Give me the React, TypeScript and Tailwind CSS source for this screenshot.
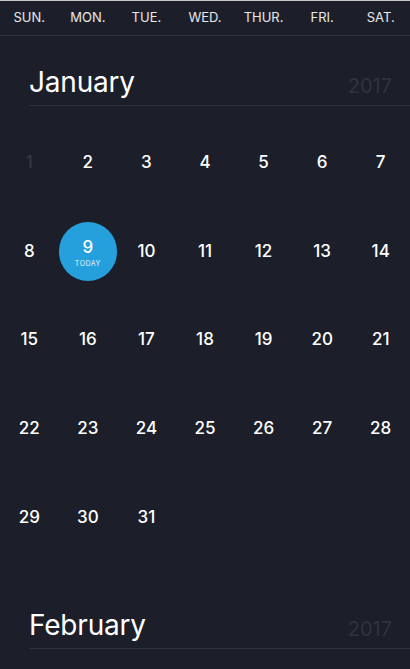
const DAYS = ['SUN.', 'MON.', 'TUE.', 'WED.', 'THUR.', 'FRI.', 'SAT.'];

function DayCell({ day, dim, today }: { day?: number; dim?: boolean; today?: boolean }) {
  if (!day) return <div className="h-[88.7px]" />;
  return (
    <div className="h-[88.7px] flex items-center justify-center">
      {today ? (
        <div className="w-[59px] h-[59px] rounded-full bg-[#269fdd] flex flex-col items-center justify-center">
          <span className="text-[17px] font-medium leading-none text-white mt-[4px]">{day}</span>
          <span className="text-[7px] leading-none tracking-[0.5px] text-white/90 mt-[4px]">TODAY</span>
        </div>
      ) : (
        <span className={`text-[17px] font-medium leading-none ${dim ? 'text-[#353944]' : 'text-white'}`}>
          {day}
        </span>
      )}
    </div>
  );
}

function Month({
  name,
  year,
  start,
  length,
  showDays = true,
}: {
  name: string;
  year: number;
  start: number;
  length: number;
  showDays?: boolean;
}) {
  const cells: (number | undefined)[] = [];
  for (let i = 0; i < start; i++) cells.push(undefined);
  for (let d = 1; d <= length; d++) cells.push(d);
  return (
    <section>
      <div className="ml-[29px] flex items-end justify-between pr-[18px] pb-[5px] border-b border-[#2d313b]">
        <h2 className="text-[28px] leading-[36px] tracking-[-0.2px] text-white">{name}</h2>
        <span className="text-[20px] leading-[28px] text-[#2f333e]">{year}</span>
      </div>
      {showDays && (
        <div className="grid grid-cols-7 pt-[12px]">
          {cells.map((d, i) => (
            <DayCell key={i} day={d} dim={d === 1 && name === 'January'} today={d === 9 && name === 'January'} />
          ))}
        </div>
      )}
    </section>
  );
}

export default function App() {
  return (
    <div className="w-[410px] h-[669px] overflow-hidden bg-[#1c1f29] font-['Inter','Liberation_Sans',sans-serif]">
      <div className="border-t border-[#c8c8c8] bg-[#1c1f29]">
        <div className="grid grid-cols-7 h-[35px] items-center border-b border-[#2d313b]">
          {DAYS.map((d) => (
            <div key={d} className="text-center text-[13px] text-white/90">
              {d}
            </div>
          ))}
        </div>
      </div>
      <div className="pt-[28px]">
        <Month name="January" year={2017} start={0} length={31} />
        <div className="pt-[46px]">
          <Month name="February" year={2017} start={3} length={28} showDays={false} />
        </div>
      </div>
    </div>
  );
}
